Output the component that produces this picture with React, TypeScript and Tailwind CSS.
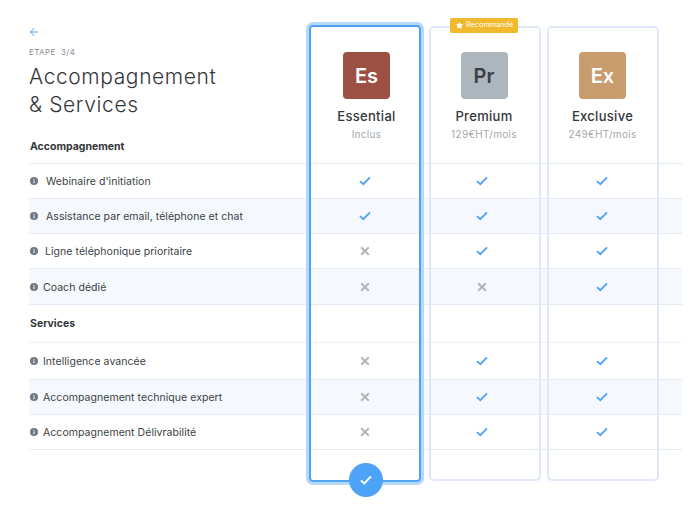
import { ArrowLeft, Star } from "lucide-react";

type Row = { label: string; gap: string; values: boolean[]; tint?: boolean; height: string };

const accompagnement: Row[] = [
  { label: "Webinaire d'initiation", gap: "gap-2", values: [true, true, true], height: "h-[35px]" },
  { label: "Assistance par email, téléphone et chat", gap: "gap-2", values: [true, true, true], tint: true, height: "h-[35px]" },
  { label: "Ligne téléphonique prioritaire", gap: "gap-[7px]", values: [false, true, true], height: "h-[35px]" },
  { label: "Coach dédié", gap: "gap-[5px]", values: [false, false, true], tint: true, height: "h-[36px]" },
];

const services: Row[] = [
  { label: "Intelligence avancée", gap: "gap-[5px]", values: [false, true, true], height: "h-[37px]" },
  { label: "Accompagnement technique expert", gap: "gap-[5px]", values: [false, true, true], tint: true, height: "h-[35px]" },
  { label: "Accompagnement Délivrabilité", gap: "gap-[5px]", values: [false, true, true], height: "h-[35px]" },
];

const plans = [
  { code: "Es", name: "Essential", price: "Inclus", tile: "bg-[#9c5044] text-white" },
  { code: "Pr", name: "Premium", price: "129€HT/mois", tile: "bg-[#aeb6bd] text-[#3a3f45]" },
  { code: "Ex", name: "Exclusive", price: "249€HT/mois", tile: "bg-[#c99c6d] text-white" },
];

function InfoDot() {
  return (
    <svg viewBox="0 0 8 8" className="w-2 h-2 shrink-0">
      <circle cx="4" cy="4" r="4" fill="#6f7883" />
      <rect x="3.5" y="3.4" width="1" height="2.8" fill="#ffffff" />
      <rect x="3.5" y="1.8" width="1" height="1" fill="#ffffff" />
    </svg>
  );
}

function Tick({ ok }: { ok: boolean }) {
  if (!ok) {
    return (
      <svg viewBox="0 0 10 10" className="w-2.5 h-2.5">
        <path d="M1.2 1.2 8.8 8.8M8.8 1.2 1.2 8.8" stroke="#b3b5b8" strokeWidth="2" fill="none" />
      </svg>
    );
  }
  return (
    <svg viewBox="0 0 12 10" className="w-3 h-2.5">
      <path d="M1 5.2 4.3 8.2 11 1.4" stroke="#4da3f8" strokeWidth="1.8" fill="none" />
    </svg>
  );
}

function FeatureRow({ row }: { row: Row }) {
  return (
    <div
      className={`grid grid-cols-[277px_118px_116px_124px_18px] items-center border-b border-[#e6ebf6] ${row.height} ${
        row.tint ? "bg-[#f5f8fc]" : ""
      }`}
    >
      <div className={`flex items-center pl-[1px] text-[10.5px] leading-[16px] tracking-[0.05px] text-[#3b3f44] ${row.gap}`}>
        <InfoDot />
        <span className="mt-[2px]">{row.label}</span>
      </div>
      {row.values.map((ok, i) => (
        <div key={i} className="flex justify-center">
          <Tick ok={ok} />
        </div>
      ))}
    </div>
  );
}

export default function App() {
  return (
    <div className="relative w-[698px] h-[517px] overflow-hidden bg-white font-['Inter',sans-serif]">
      <div className="pl-[29px] pr-4">
        {/* header */}
        <div className="grid grid-cols-[279px_117px_118px_119px] h-[164px] border-b border-[#e6ebf6]">
          <div className="pt-[26px]">
            <ArrowLeft className="w-3 h-3 -ml-[1px] text-[#4da3f8]" strokeWidth={2} />
            <p className="mt-[8px] text-[8px] leading-[12px] tracking-[0.4px] text-[#8a8d91] whitespace-pre">ETAPE  3/4</p>
            <h1 className="mt-[5px] text-[21px] leading-[28px] font-light tracking-[0.6px] text-[#33363a]">
              Accompagnement
              <br />& Services
            </h1>
            <h2 className="mt-[21px] pl-[1px] text-[10.5px] leading-[14px] font-bold text-[#33363a]">Accompagnement</h2>
          </div>
          {plans.map((plan) => (
            <div key={plan.code} className="flex flex-col items-center pt-[52px]">
              <div
                className={`flex items-center justify-center w-[47px] h-[47px] rounded-[4px] text-[20px] font-semibold ${plan.tile}`}
              >
                {plan.code}
              </div>
              <p className="mt-[8px] text-[13px] leading-[18px] font-medium tracking-[0.3px] text-[#33363a]">{plan.name}</p>
              <p className="mt-[2px] text-[10px] leading-[14px] tracking-[0.3px] text-[#a5a8ab]">{plan.price}</p>
            </div>
          ))}
        </div>

        {accompagnement.map((row) => (
          <FeatureRow key={row.label} row={row} />
        ))}

        <div className="flex items-center h-[38px] pl-[1px] border-b border-[#eef1f9] text-[10.5px] font-bold text-[#33363a]">
          Services
        </div>

        {services.map((row) => (
          <FeatureRow key={row.label} row={row} />
        ))}
      </div>

      {/* plan frames sit over the table */}
      <div className="absolute left-[309px] top-[25px] w-[112px] h-[457px] rounded-[4px] border-2 border-[#4da3f8] ring-[3px] ring-[#b5d8fb]" />
      <div className="absolute left-[429px] top-[26px] w-[112px] h-[455px] rounded-[5px] border-2 border-[#dfe7f9]" />
      <div className="absolute left-[547px] top-[26px] w-[112px] h-[455px] rounded-[5px] border-2 border-[#dfe7f9]" />

      <div className="absolute left-[450px] top-[18px] flex items-center gap-[3px] w-[68px] h-[15px] pl-[6px] rounded-[2px] bg-[#f2b82e] text-[7.3px] text-white">
        <Star className="w-[7px] h-[7px] fill-white text-white" />
        Recommandé
      </div>

      <div className="absolute left-[349px] top-[463px] flex items-center justify-center w-[34px] h-[34px] rounded-full bg-[#4da3f8]">
        <svg viewBox="0 0 12 10" className="w-3 h-2.5">
          <path d="M1 5.4 4.3 8.4 11 1.4" stroke="#ffffff" strokeWidth="2" fill="none" />
        </svg>
      </div>
    </div>
  );
}
